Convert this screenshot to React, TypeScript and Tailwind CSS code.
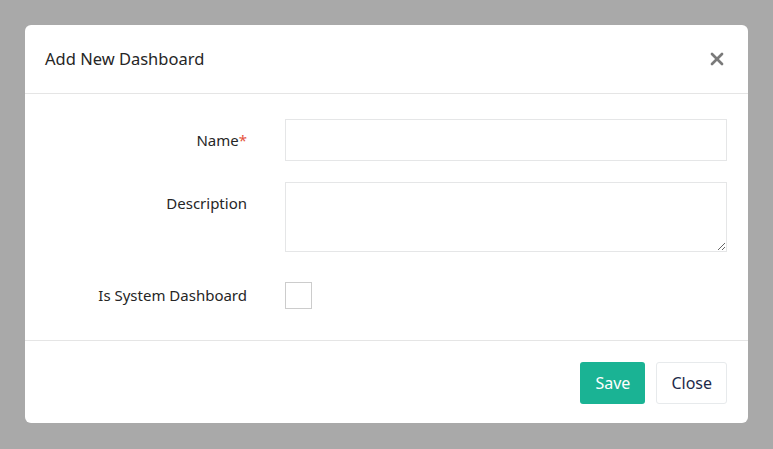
import { X } from 'lucide-react'

export default function App() {
  return (
    <div
      className="min-h-screen w-full bg-[#a9a9a9] p-[25px]"
      style={{ fontFamily: '"Noto Sans", "Open Sans", sans-serif' }}
    >
      <div className="w-[723px] rounded-[6px] bg-white text-[#262626]">
        <div className="flex h-[69px] items-center justify-between border-b border-[#e5e5e5] px-5">
          <h4 className="text-[16.5px]">Add New Dashboard</h4>
          <button type="button" className="mr-[1px] text-[#7a7a7a]" aria-label="Close">
            <X size={20} strokeWidth={3.2} />
          </button>
        </div>

        <div className="pt-[25px] pb-[25px] pr-[21px]">
          <div className="grid grid-cols-[222px_1fr] gap-x-[38px]">
            <label className="flex h-[42px] items-center justify-end text-[15px]">
              Name<span className="text-[#e5533d]">*</span>
            </label>
            <input className="h-[42px] border border-[#e5e6e7] px-3 outline-none" />

            <label className="mt-[21px] flex justify-end pt-[10px] text-[15px]">Description</label>
            <textarea className="mt-[21px] h-[70px] border border-[#e5e6e7] px-3 py-2 outline-none" />

            <label className="mt-[30px] flex h-[27px] items-center justify-end text-[15px]">
              Is System Dashboard
            </label>
            <div className="mt-[30px]">
              <input type="checkbox" className="h-[27px] w-[27px] appearance-none border border-[#ccc] bg-white" />
            </div>
          </div>
        </div>

        <div className="flex items-center justify-end gap-[11px] border-t border-[#e5e5e5] px-[21px] pt-[21px] pb-[19px]">
          <button type="button" className="h-[42px] rounded-[3px] bg-[#1ab394] px-[15px] text-[16px] text-white">
            Save
          </button>
          <button
            type="button"
            className="h-[42px] rounded-[3px] border border-[#e7eaec] bg-white px-[14px] text-[16px] text-[#1c2a4a]"
          >
            Close
          </button>
        </div>
      </div>
    </div>
  )
}
